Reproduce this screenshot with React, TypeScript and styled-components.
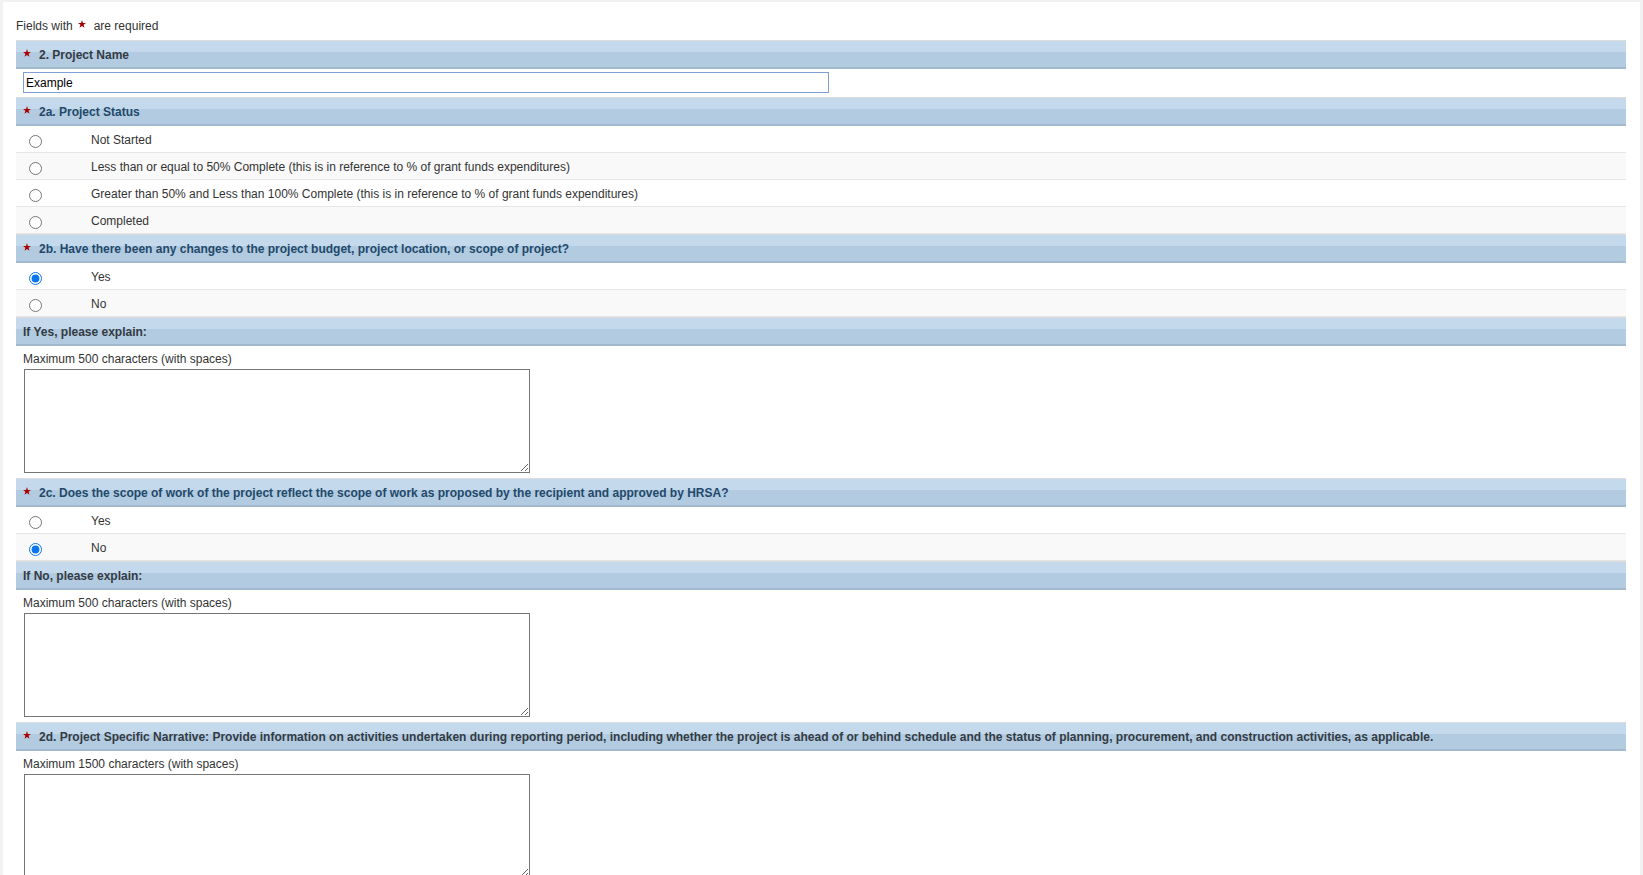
import styled, { createGlobalStyle } from 'styled-components';

const GlobalStyle = createGlobalStyle`
    html, body {
        margin: 0;
        padding: 0;
        background: #f2f2f2;
    }
    body {
        font-family: "Liberation Sans", Arial, sans-serif;
        font-size: 12px;
        color: #333;
    }
`;

const Panel = styled.div`
    margin: 2px 3px 0 3px;
    background: #fff;
    padding: 16px 14px 20px 13px;
`;

const RequiredNote = styled.div`
    display: flex;
    align-items: center;
    height: 16px;
    margin-bottom: 6px;
    line-height: 16px;
    color: #333;

    .star {
        margin: 0 8px 0 5px;
        position: relative;
        top: -2px;
    }
`;

const Bar = styled.div<{ $tone: 'blue' | 'dark' }>`
    display: flex;
    align-items: center;
    box-sizing: border-box;
    height: 29px;
    padding: 2px 0 0 7px;
    border-top: 1px solid #dcdcdc;
    border-bottom: 2px solid #a2b9cd;
    background: linear-gradient(to bottom, #c4d9ec 0%, #c4d9ec 42%, #b2cbe0 42%, #b2cbe0 100%);
    font-weight: bold;
    font-size: 12px;
    color: ${p => (p.$tone === 'blue' ? '#22496b' : '#333b45')};
    white-space: nowrap;

    .star {
        margin-right: 8px;
        position: relative;
        top: -2px;
        flex-shrink: 0;
    }
`;

const InputRow = styled.div`
    box-sizing: border-box;
    height: 28px;
    padding: 3px 0 0 7px;
`;

const TextInput = styled.input`
    box-sizing: border-box;
    width: 806px;
    height: 21px;
    padding: 0 2px;
    border: 1px solid #7f9fd9;
    font-family: "Liberation Sans", Arial, sans-serif;
    font-size: 12px;
    color: #000;
    outline: none;
    caret-color: #000;
`;

const OptionRow = styled.label<{ $alt: boolean }>`
    display: flex;
    align-items: center;
    box-sizing: border-box;
    height: 27px;
    padding-top: 2px;
    border-bottom: 1px solid #e6e6e6;
    background: ${p => (p.$alt ? '#f9f9f9' : '#fff')};
    color: #333;
    cursor: pointer;

    input {
        width: 13px;
        height: 13px;
        margin: 3px 0 0 13px;
        accent-color: #0b75f0;
    }

    span {
        margin-left: 49px;
    }
`;

const ExplainBlock = styled.div`
    box-sizing: border-box;
    padding: 5px 0 5px 7px;
`;

const Hint = styled.div`
    height: 16px;
    line-height: 17px;
    color: #333;
`;

const TextArea = styled.textarea`
    display: block;
    box-sizing: border-box;
    width: 506px;
    height: 104px;
    margin: 2px 0 0 1px;
    border: 1px solid #767676;
    font-family: "Liberation Sans", Arial, sans-serif;
    font-size: 12px;
`;

const Star = () => (
    <svg className="star" width="8" height="8" viewBox="0 0 10 10">
        <polygon
            points="5,0 6.2,3.6 10,3.7 7,6 8.1,9.8 5,7.6 1.9,9.8 3,6 0,3.7 3.8,3.6"
            fill="#a80000"
        />
    </svg>
);

type Option = { label: string; checked?: boolean };

const RadioGroup = ({ name, options }: { name: string; options: Option[] }) => (
    <>
        {options.map((o, i) => (
            <OptionRow key={o.label} $alt={i % 2 === 1}>
                <input type="radio" name={name} defaultChecked={o.checked} />
                <span>{o.label}</span>
            </OptionRow>
        ))}
    </>
);

const Explain = ({ max }: { max: string }) => (
    <ExplainBlock>
        <Hint>Maximum {max} characters (with spaces)</Hint>
        <TextArea />
    </ExplainBlock>
);

export default function App() {
    return (
        <>
            <GlobalStyle />
            <Panel>
                <RequiredNote>
                    Fields with <Star /> are required
                </RequiredNote>

                <Bar $tone="dark"><Star />2. Project Name</Bar>
                <InputRow>
                    <TextInput type="text" defaultValue="Example" autoFocus />
                </InputRow>

                <Bar $tone="blue"><Star />2a. Project Status</Bar>
                <RadioGroup
                    name="status"
                    options={[
                        { label: 'Not Started' },
                        { label: 'Less than or equal to 50% Complete (this is in reference to % of grant funds expenditures)' },
                        { label: 'Greater than 50% and Less than 100% Complete (this is in reference to % of grant funds expenditures)' },
                        { label: 'Completed' },
                    ]}
                />

                <Bar $tone="blue"><Star />2b. Have there been any changes to the project budget, project location, or scope of project?</Bar>
                <RadioGroup
                    name="changes"
                    options={[{ label: 'Yes', checked: true }, { label: 'No' }]}
                />

                <Bar $tone="dark">If Yes, please explain:</Bar>
                <Explain max="500" />

                <Bar $tone="blue"><Star />2c. Does the scope of work of the project reflect the scope of work as proposed by the recipient and approved by HRSA?</Bar>
                <RadioGroup
                    name="scope"
                    options={[{ label: 'Yes' }, { label: 'No', checked: true }]}
                />

                <Bar $tone="dark">If No, please explain:</Bar>
                <Explain max="500" />

                <Bar $tone="dark"><Star />2d. Project Specific Narrative: Provide information on activities undertaken during reporting period, including whether the project is ahead of or behind schedule and the status of planning, procurement, and construction activities, as applicable.</Bar>
                <Explain max="1500" />
            </Panel>
        </>
    );
}
